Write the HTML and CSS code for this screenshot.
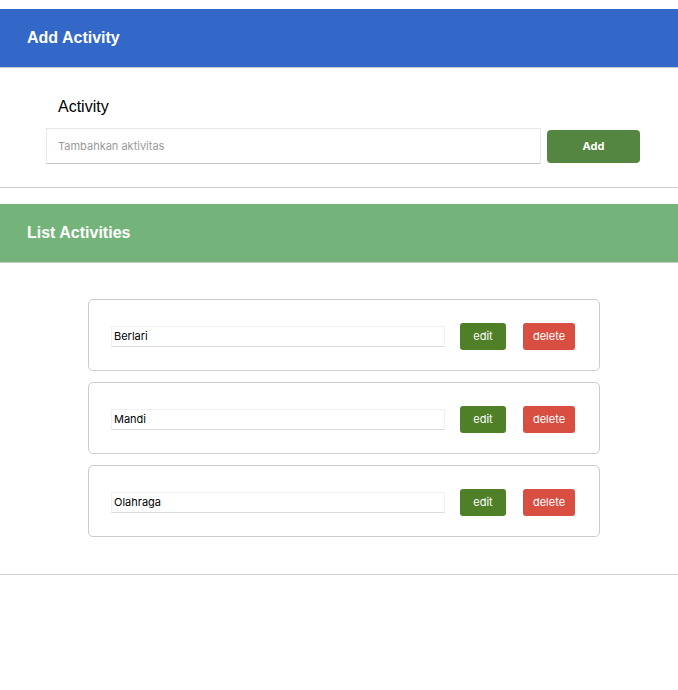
FILE: index.html
```html
<!DOCTYPE html>
<html>
<head>
<meta charset="utf-8">
<link rel="stylesheet" href="styles.css">
</head>
<body>
<header class="bar bar-blue"><h1>Add Activity</h1></header>
<section class="form">
  <label class="label" for="act">Activity</label>
  <div class="form-row">
    <input id="act" class="main-input" placeholder="Tambahkan aktivitas">
    <button class="btn-add">Add</button>
  </div>
</section>
<hr class="rule">
<header class="bar bar-green"><h1>List Activities</h1></header>
<section class="list">
  <div class="card">
    <input class="item-input" value="Berlari">
    <button class="btn btn-edit">edit</button>
    <button class="btn btn-delete">delete</button>
  </div>
  <div class="card">
    <input class="item-input" value="Mandi">
    <button class="btn btn-edit">edit</button>
    <button class="btn btn-delete">delete</button>
  </div>
  <div class="card">
    <input class="item-input" value="Olahraga">
    <button class="btn btn-edit">edit</button>
    <button class="btn btn-delete">delete</button>
  </div>
</section>
<hr class="rule">
</body>
</html>
```
FILE: styles.css
```css
* { box-sizing: border-box; }
body {
  margin: 0;
  padding-top: 9px;
  font-family: "Liberation Sans", Arial, sans-serif;
  background: #fff;
}
.bar {
  height: 59px;
  display: flex;
  align-items: center;
  padding-left: 27px;
  border-bottom: 1px solid #c8c8c8;
}
.bar h1 {
  margin: 0;
  color: #fff;
  font-size: 16px;
  font-weight: bold;
}
.bar-blue { background: #3367c8; }
.bar-green { background: #74b47b; margin-top: 16px; }
.form {
  padding: 30px 38px 23px 46px;
}
.label {
  display: block;
  font-size: 16px;
  color: #000;
  margin-left: 12px;
  margin-bottom: 12px;
}
.form-row {
  display: flex;
  align-items: center;
  gap: 6px;
}
.main-input {
  width: 495px;
  height: 36px;
  border: 1px solid #e8e8e8;
  border-bottom: 1px solid #c4c4c4;
  padding: 0 11px;
  font-family: "Inter", sans-serif;
  font-size: 11px;
  outline: none;
}
.main-input::placeholder { color: #9a9a9a; }
.btn-add {
  width: 93px;
  height: 33px;
  border: none;
  border-radius: 4px;
  background: #548642;
  color: #fff;
  font-family: "Inter", sans-serif;
  font-weight: bold;
  font-size: 11px;
}
.rule {
  margin: 0;
  border: none;
  border-top: 1px solid #cfcfcf;
}
.list {
  padding: 36px 0 37px 88px;
  display: flex;
  flex-direction: column;
  gap: 11px;
}
.card {
  width: 512px;
  height: 72px;
  border: 1px solid #cccccc;
  border-radius: 5px;
  display: flex;
  align-items: center;
  padding-left: 22px;
  padding-top: 2px;
}
.item-input {
  width: 334px;
  height: 21px;
  border: 1px solid #f0f0f0;
  border-bottom: 1px solid #dcdcdc;
  padding: 0 2px;
  font-family: "Inter", sans-serif;
  font-size: 11px;
  color: #000;
  outline: none;
  margin-right: 15px;
}
.btn {
  height: 27px;
  border: none;
  border-radius: 3px;
  color: #fff;
  font-family: "Inter", sans-serif;
  font-size: 11px;
  padding: 0;
}
.btn-edit { width: 46px; background: #4f7f26; margin-right: 17px; }
.btn-delete { width: 52px; background: #d84f42; }
```
